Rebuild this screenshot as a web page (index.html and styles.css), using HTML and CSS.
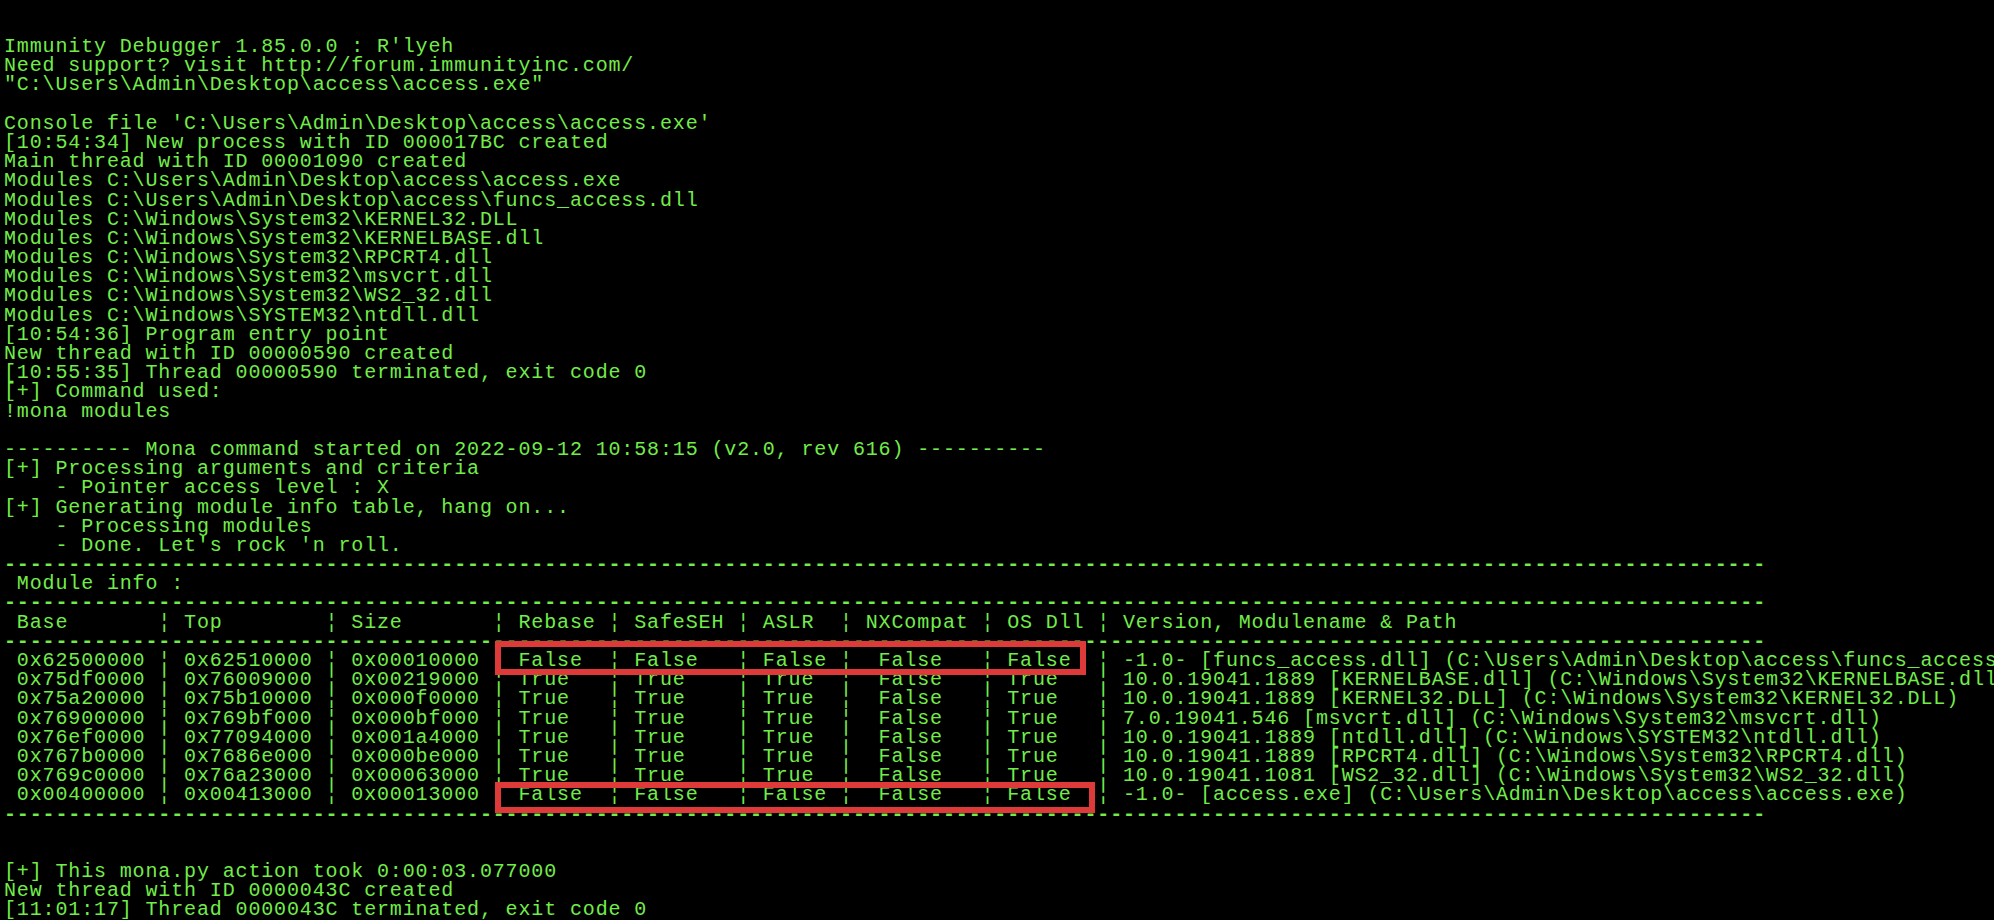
FILE: index.html
```
<!DOCTYPE html>
<html>
<head>
<meta charset="utf-8">
<title>Immunity Debugger - Log</title>
<link rel="stylesheet" href="styles.css">
</head>
<body>
<div class="console">
<div class="ln">Immunity Debugger 1.85.0.0 : R'lyeh</div>
<div class="ln">Need support? visit http://forum.immunityinc.com/</div>
<div class="ln">"C:\Users\Admin\Desktop\access\access.exe"</div>
<div class="ln"> </div>
<div class="ln">Console file 'C:\Users\Admin\Desktop\access\access.exe'</div>
<div class="ln">[10:54:34] New process with ID 000017BC created</div>
<div class="ln">Main thread with ID 00001090 created</div>
<div class="ln">Modules C:\Users\Admin\Desktop\access\access.exe</div>
<div class="ln">Modules C:\Users\Admin\Desktop\access\funcs_access.dll</div>
<div class="ln">Modules C:\Windows\System32\KERNEL32.DLL</div>
<div class="ln">Modules C:\Windows\System32\KERNELBASE.dll</div>
<div class="ln">Modules C:\Windows\System32\RPCRT4.dll</div>
<div class="ln">Modules C:\Windows\System32\msvcrt.dll</div>
<div class="ln">Modules C:\Windows\System32\WS2_32.dll</div>
<div class="ln">Modules C:\Windows\SYSTEM32\ntdll.dll</div>
<div class="ln">[10:54:36] Program entry point</div>
<div class="ln">New thread with ID 00000590 created</div>
<div class="ln">[10:55:35] Thread 00000590 terminated, exit code 0</div>
<div class="ln">[+] Command used:</div>
<div class="ln">!mona modules</div>
<div class="ln"> </div>
<div class="ln">---------- Mona command started on 2022-09-12 10:58:15 (v2.0, rev 616) ----------</div>
<div class="ln">[+] Processing arguments and criteria</div>
<div class="ln">    - Pointer access level : X</div>
<div class="ln">[+] Generating module info table, hang on...</div>
<div class="ln">    - Processing modules</div>
<div class="ln">    - Done. Let's rock 'n roll.</div>
<div class="ln dash">-----------------------------------------------------------------------------------------------------------------------------------------</div>
<div class="ln"> Module info :</div>
<div class="ln dash">-----------------------------------------------------------------------------------------------------------------------------------------</div>
<div class="ln"> Base       ¦ Top        ¦ Size       ¦ Rebase ¦ SafeSEH ¦ ASLR  ¦ NXCompat ¦ OS Dll ¦ Version, Modulename &amp; Path</div>
<div class="ln dash">-----------------------------------------------------------------------------------------------------------------------------------------</div>
<div class="ln"> 0x62500000 ¦ 0x62510000 ¦ 0x00010000 ¦<span class="hl hl-first"> False  ¦ False   ¦ False ¦  False   ¦ False  </span>¦ -1.0- [funcs_access.dll] (C:\Users\Admin\Desktop\access\funcs_access.dll)</div>
<div class="ln"> 0x75df0000 ¦ 0x76009000 ¦ 0x00219000 ¦ True   ¦ True    ¦ True  ¦  False   ¦ True   ¦ 10.0.19041.1889 [KERNELBASE.dll] (C:\Windows\System32\KERNELBASE.dll)</div>
<div class="ln"> 0x75a20000 ¦ 0x75b10000 ¦ 0x000f0000 ¦ True   ¦ True    ¦ True  ¦  False   ¦ True   ¦ 10.0.19041.1889 [KERNEL32.DLL] (C:\Windows\System32\KERNEL32.DLL)</div>
<div class="ln"> 0x76900000 ¦ 0x769bf000 ¦ 0x000bf000 ¦ True   ¦ True    ¦ True  ¦  False   ¦ True   ¦ 7.0.19041.546 [msvcrt.dll] (C:\Windows\System32\msvcrt.dll)</div>
<div class="ln"> 0x76ef0000 ¦ 0x77094000 ¦ 0x001a4000 ¦ True   ¦ True    ¦ True  ¦  False   ¦ True   ¦ 10.0.19041.1889 [ntdll.dll] (C:\Windows\SYSTEM32\ntdll.dll)</div>
<div class="ln"> 0x767b0000 ¦ 0x7686e000 ¦ 0x000be000 ¦ True   ¦ True    ¦ True  ¦  False   ¦ True   ¦ 10.0.19041.1889 [RPCRT4.dll] (C:\Windows\System32\RPCRT4.dll)</div>
<div class="ln"> 0x769c0000 ¦ 0x76a23000 ¦ 0x00063000 ¦ True   ¦ True    ¦ True  ¦  False   ¦ True   ¦ 10.0.19041.1081 [WS2_32.dll] (C:\Windows\System32\WS2_32.dll)</div>
<div class="ln"> 0x00400000 ¦ 0x00413000 ¦ 0x00013000 ¦<span class="hl hl-last"> False  ¦ False   ¦ False ¦  False   ¦ False  </span>¦ -1.0- [access.exe] (C:\Users\Admin\Desktop\access\access.exe)</div>
<div class="ln dash">-----------------------------------------------------------------------------------------------------------------------------------------</div>
<div class="ln"> </div>
<div class="ln"> </div>
<div class="ln">[+] This mona.py action took 0:00:03.077000</div>
<div class="ln">New thread with ID 0000043C created</div>
<div class="ln">[11:01:17] Thread 0000043C terminated, exit code 0</div>
</div>
</body>
</html>
```

FILE: styles.css
```
html, body {
  margin: 0;
  padding: 0;
  background: #000;
  width: 1994px;
  height: 920px;
  overflow: hidden;
}

.console {
  padding: 37px 0 0 4px;
  font-family: "Liberation Mono", "DejaVu Sans Mono", monospace;
  font-size: 20px;
  letter-spacing: 0.86px;
  line-height: 19.2px;
  color: #72ec4a;
}

.ln {
  height: 19.2px;
  white-space: pre;
}

.dash {
  font-weight: bold;
}

.hl {
  position: relative;
  display: inline-block;
  vertical-align: top;
  height: 19.2px;
}

.hl::after {
  content: "";
  position: absolute;
  left: -10.5px;
  border: 6px solid #df3a3a;
  box-sizing: border-box;
}

.hl-first::after {
  top: -10.4px;
  bottom: -4.4px;
  right: 11px;
}

.hl-last::after {
  top: -3px;
  bottom: -8px;
  right: 2px;
}
```
